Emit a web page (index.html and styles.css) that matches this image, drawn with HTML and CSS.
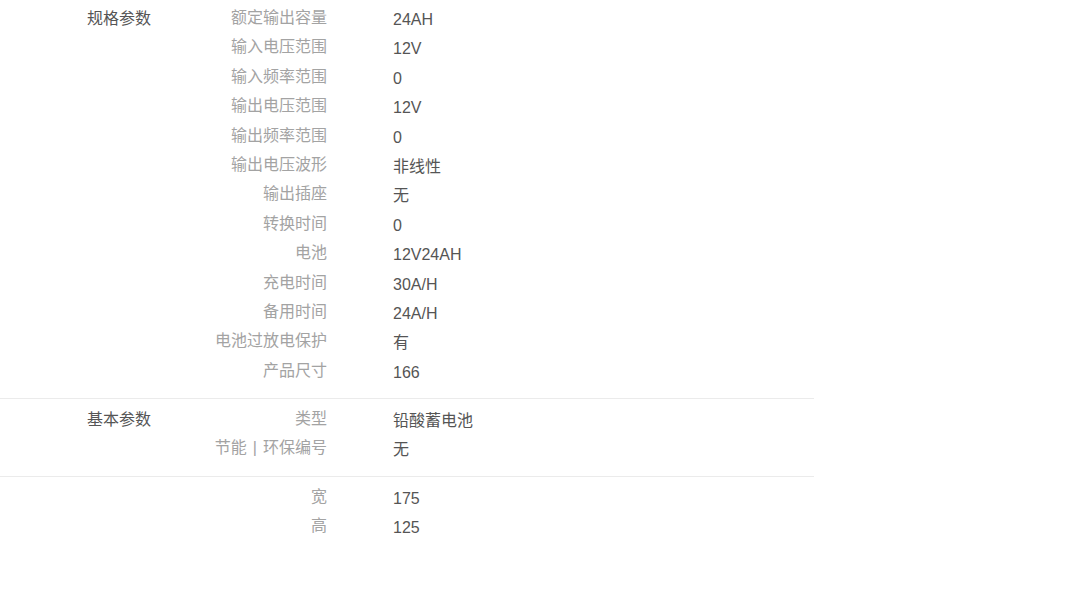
FILE: index.html
```html
<!DOCTYPE html>
<html lang="zh-CN">
<head>
    <meta charset="UTF-8">
    <meta name="viewport" content="width=device-width, initial-scale=1.0">
    <title>产品参数</title>
    <link rel="stylesheet" href="styles.css">
</head>
<body>
    <div class="params">
        <div class="section">
            <div class="sec-title">规格参数</div>
            <div class="rows">
                <div class="row"><div class="label">额定输出容量</div><div class="value">24AH</div></div>
                <div class="row"><div class="label">输入电压范围</div><div class="value">12V</div></div>
                <div class="row"><div class="label">输入频率范围</div><div class="value">0</div></div>
                <div class="row"><div class="label">输出电压范围</div><div class="value">12V</div></div>
                <div class="row"><div class="label">输出频率范围</div><div class="value">0</div></div>
                <div class="row"><div class="label">输出电压波形</div><div class="value">非线性</div></div>
                <div class="row"><div class="label">输出插座</div><div class="value">无</div></div>
                <div class="row"><div class="label">转换时间</div><div class="value">0</div></div>
                <div class="row"><div class="label">电池</div><div class="value">12V24AH</div></div>
                <div class="row"><div class="label">充电时间</div><div class="value">30A/H</div></div>
                <div class="row"><div class="label">备用时间</div><div class="value">24A/H</div></div>
                <div class="row"><div class="label">电池过放电保护</div><div class="value">有</div></div>
                <div class="row"><div class="label">产品尺寸</div><div class="value">166</div></div>
            </div>
        </div>
        <div class="section">
            <div class="sec-title">基本参数</div>
            <div class="rows">
                <div class="row"><div class="label">类型</div><div class="value">铅酸蓄电池</div></div>
                <div class="row"><div class="label">节能<span class="sep">|</span>环保编号</div><div class="value">无</div></div>
            </div>
        </div>
        <div class="section last">
            <div class="sec-title"></div>
            <div class="rows">
                <div class="row"><div class="label">宽</div><div class="value">175</div></div>
                <div class="row"><div class="label">高</div><div class="value">125</div></div>
            </div>
        </div>
    </div>
</body>
</html>
```

FILE: styles.css
```css
body {
    margin: 0;
    font-family: "Liberation Sans", "Noto Sans CJK SC", sans-serif;
    font-size: 16px;
    background-color: #fff;
    color: #555;
}
.params {
    width: 814px;
    margin-top: -2px;
}
.section {
    display: flex;
    padding: 5px 0 13px;
    border-bottom: 1px solid #ebebeb;
}
.section.last {
    border-bottom: none;
}
.sec-title {
    width: 113px;
    margin-left: 87px;
    padding-top: 1px;
    height: 29.4px;
    line-height: 29.4px;
    color: #555;
}
.row {
    display: flex;
    height: 29.4px;
    line-height: 29.4px;
}
.label {
    width: 127px;
    text-align: right;
    color: #a3a3a3;
}
.sep {
    padding: 0 6px;
}
.value {
    margin-left: 66px;
    padding-top: 2px;
    color: #555;
}
```
